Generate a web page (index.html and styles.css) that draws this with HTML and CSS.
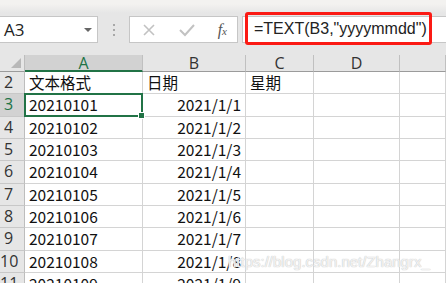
FILE: index.html
```html
<!DOCTYPE html>
<html>
<head>
	<meta charset="UTF-8">
	<title>TEXT</title>
	<link rel="stylesheet" href="styles.css">
</head>
<body>
<div id="sheet">

	<div id="bar">
		<div id="nameBox">
			<span class="ref">A3</span>
			<span class="arrow"></span>
		</div>
		<div id="grip"><i></i><i></i><i></i></div>
		<div id="btnBox">
			<svg width="14" height="14" viewBox="0 0 14 14"><path d="M2 2 L12 12 M12 2 L2 12" stroke="#c2c2c2" stroke-width="1.6" fill="none"/></svg>
			<svg width="16" height="14" viewBox="0 0 16 14"><path d="M1 7 L6 12 L15 2" stroke="#c2c2c2" stroke-width="2" fill="none"/></svg>
			<span class="fx">f<sub>x</sub></span>
		</div>
		<div id="formula">
			<span class="mark">=TEXT(B3,"yyyymmdd")</span>
		</div>
	</div>

	<div id="grid">
		<div class="corner"><span></span></div>
		<div class="colHead sel">A</div>
		<div class="colHead">B</div>
		<div class="colHead">C</div>
		<div class="colHead">D</div>
		<div class="colHead"></div>

		<div class="rowHead">2</div>
		<div class="cell">文本格式</div>
		<div class="cell">日期</div>
		<div class="cell">星期</div>
		<div class="cell"></div>
		<div class="cell"></div>

		<div class="rowHead sel">3</div>
		<div class="cell active">20210101</div>
		<div class="cell num">2021/1/1</div>
		<div class="cell"></div>
		<div class="cell"></div>
		<div class="cell"></div>

		<div class="rowHead">4</div>
		<div class="cell">20210102</div>
		<div class="cell num">2021/1/2</div>
		<div class="cell"></div>
		<div class="cell"></div>
		<div class="cell"></div>

		<div class="rowHead">5</div>
		<div class="cell">20210103</div>
		<div class="cell num">2021/1/3</div>
		<div class="cell"></div>
		<div class="cell"></div>
		<div class="cell"></div>

		<div class="rowHead">6</div>
		<div class="cell">20210104</div>
		<div class="cell num">2021/1/4</div>
		<div class="cell"></div>
		<div class="cell"></div>
		<div class="cell"></div>

		<div class="rowHead">7</div>
		<div class="cell">20210105</div>
		<div class="cell num">2021/1/5</div>
		<div class="cell"></div>
		<div class="cell"></div>
		<div class="cell"></div>

		<div class="rowHead">8</div>
		<div class="cell">20210106</div>
		<div class="cell num">2021/1/6</div>
		<div class="cell"></div>
		<div class="cell"></div>
		<div class="cell"></div>

		<div class="rowHead">9</div>
		<div class="cell">20210107</div>
		<div class="cell num">2021/1/7</div>
		<div class="cell"></div>
		<div class="cell"></div>
		<div class="cell"></div>

		<div class="rowHead">10</div>
		<div class="cell">20210108</div>
		<div class="cell num">2021/1/8</div>
		<div class="cell"></div>
		<div class="cell"></div>
		<div class="cell"></div>

		<div class="rowHead">11</div>
		<div class="cell">20210109</div>
		<div class="cell num">2021/1/9</div>
		<div class="cell"></div>
		<div class="cell"></div>
		<div class="cell"></div>
	</div>

	<div id="water">https://blog.csdn.net/Zhangrx_</div>
</div>
</body>
</html>
```
FILE: styles.css
```css
body{
	margin:0;
	background:#fff;
	font-family:"Noto Sans CJK SC", sans-serif;
	overflow:hidden;
}

#sheet{
	position:relative;
	width:446px;
	height:283px;
	overflow:hidden;
}

#bar{
	height:55px;
	box-sizing:border-box;
	padding-top:16px;
	display:flex;
	align-items:flex-start;
	background:linear-gradient(#f3f2f0 0px, #f3f2f0 4px, #e6e6e6 13px, #e6e6e6 100%);
}

#nameBox{
	width:98px;
	height:27px;
	box-sizing:border-box;
	background:#fff;
	border:1px solid #c6c6c6;
	border-left:none;
	display:flex;
	align-items:center;
	justify-content:space-between;
	padding:0 5px 0 4px;
}
.ref{
	font-family:"Open Sans", sans-serif;
	font-size:17px;
	color:#222;
}
.arrow{
	width:0;
	height:0;
	border-left:4px solid transparent;
	border-right:4px solid transparent;
	border-top:4px solid #666;
}

#grip{
	width:31px;
	height:27px;
	display:flex;
	flex-direction:column;
	align-items:center;
	justify-content:center;
	gap:3px;
}
#grip i{
	width:2px;
	height:2px;
	background:#a8a8a8;
}

#btnBox{
	width:109px;
	height:27px;
	box-sizing:border-box;
	background:#fff;
	border:1px solid #c6c6c6;
	display:flex;
	align-items:center;
	justify-content:space-between;
	padding:0 10px 0 12px;
}
.fx{
	font-family:"Liberation Serif", serif;
	font-style:italic;
	font-size:16px;
	color:#555;
	line-height:1;
}
.fx sub{
	font-size:11px;
	vertical-align:baseline;
	position:relative;
	top:0;
}

#formula{
	flex:1;
	height:27px;
	margin-left:4px;
	box-sizing:border-box;
	background:#fff;
	border:1px solid #c6c6c6;
	border-right:none;
	position:relative;
}
.mark{
	position:absolute;
	left:2px;
	top:-5px;
	width:187px;
	height:33px;
	box-sizing:border-box;
	border:3px solid #fb1a14;
	border-radius:3px;
	padding-left:6px;
	font-family:"Liberation Sans", sans-serif;
	font-size:16px;
	line-height:27px;
	color:#222;
	white-space:nowrap;
}

#grid{
	display:grid;
	grid-template-columns:25px 118px 103px 68px 86px 46px;
	grid-template-rows:17px 22px 23px 22px 22px 23px 22px 22px 23px 22px 22px;
	background:#fff;
}

.corner{
	background:#e6e6e6;
	border-right:1px solid #bdbdbd;
	border-bottom:1px solid #9b9b9b;
	position:relative;
}
.corner span{
	position:absolute;
	right:3px;
	bottom:3px;
	width:0;
	height:0;
	border-left:10px solid transparent;
	border-bottom:10px solid #b8b8b8;
}

.colHead{
	background:#e6e6e6;
	border-right:1px solid #c0c0c0;
	border-bottom:1px solid #9b9b9b;
	text-align:center;
	font-family:"Open Sans", sans-serif;
	font-size:16px;
	line-height:17px;
	color:#333;
}
.colHead.sel{
	background:#d2d2d2;
	color:#217346;
	border-bottom:2px solid #217346;
}

.rowHead{
	background:#e6e6e6;
	border-right:1px solid #bdbdbd;
	border-bottom:1px solid #c8c8c8;
	box-sizing:border-box;
	padding-right:7px;
	text-align:center;
	font-family:"Open Sans", sans-serif;
	font-size:16px;
	line-height:21px;
	color:#333;
}
.rowHead.sel{
	background:#d2d2d2;
	color:#217346;
}

.cell{
	border-right:1px solid #d4d4d4;
	border-bottom:1px solid #d4d4d4;
	padding:0 4px;
	font-size:15.5px;
	line-height:21px;
	color:#111;
	white-space:nowrap;
	overflow:visible;
}
.cell.num{
	text-align:right;
}
.cell.active{
	position:relative;
}
.cell.active::after{
	content:"";
	position:absolute;
	left:-1px;
	top:-1px;
	right:-1px;
	bottom:-1px;
	border:2px solid #217346;
}
.cell.active::before{
	content:"";
	position:absolute;
	right:-3px;
	bottom:-3px;
	width:5px;
	height:5px;
	background:#217346;
	border:1px solid #fff;
	z-index:2;
}

#water{
	position:absolute;
	left:228px;
	top:253px;
	font-family:"Liberation Sans", sans-serif;
	font-size:15px;
	color:rgba(255,255,255,0.75);
	text-shadow:0 0 1px #c9c9c9, 0 0 1px #c9c9c9;
	white-space:nowrap;
}
```
